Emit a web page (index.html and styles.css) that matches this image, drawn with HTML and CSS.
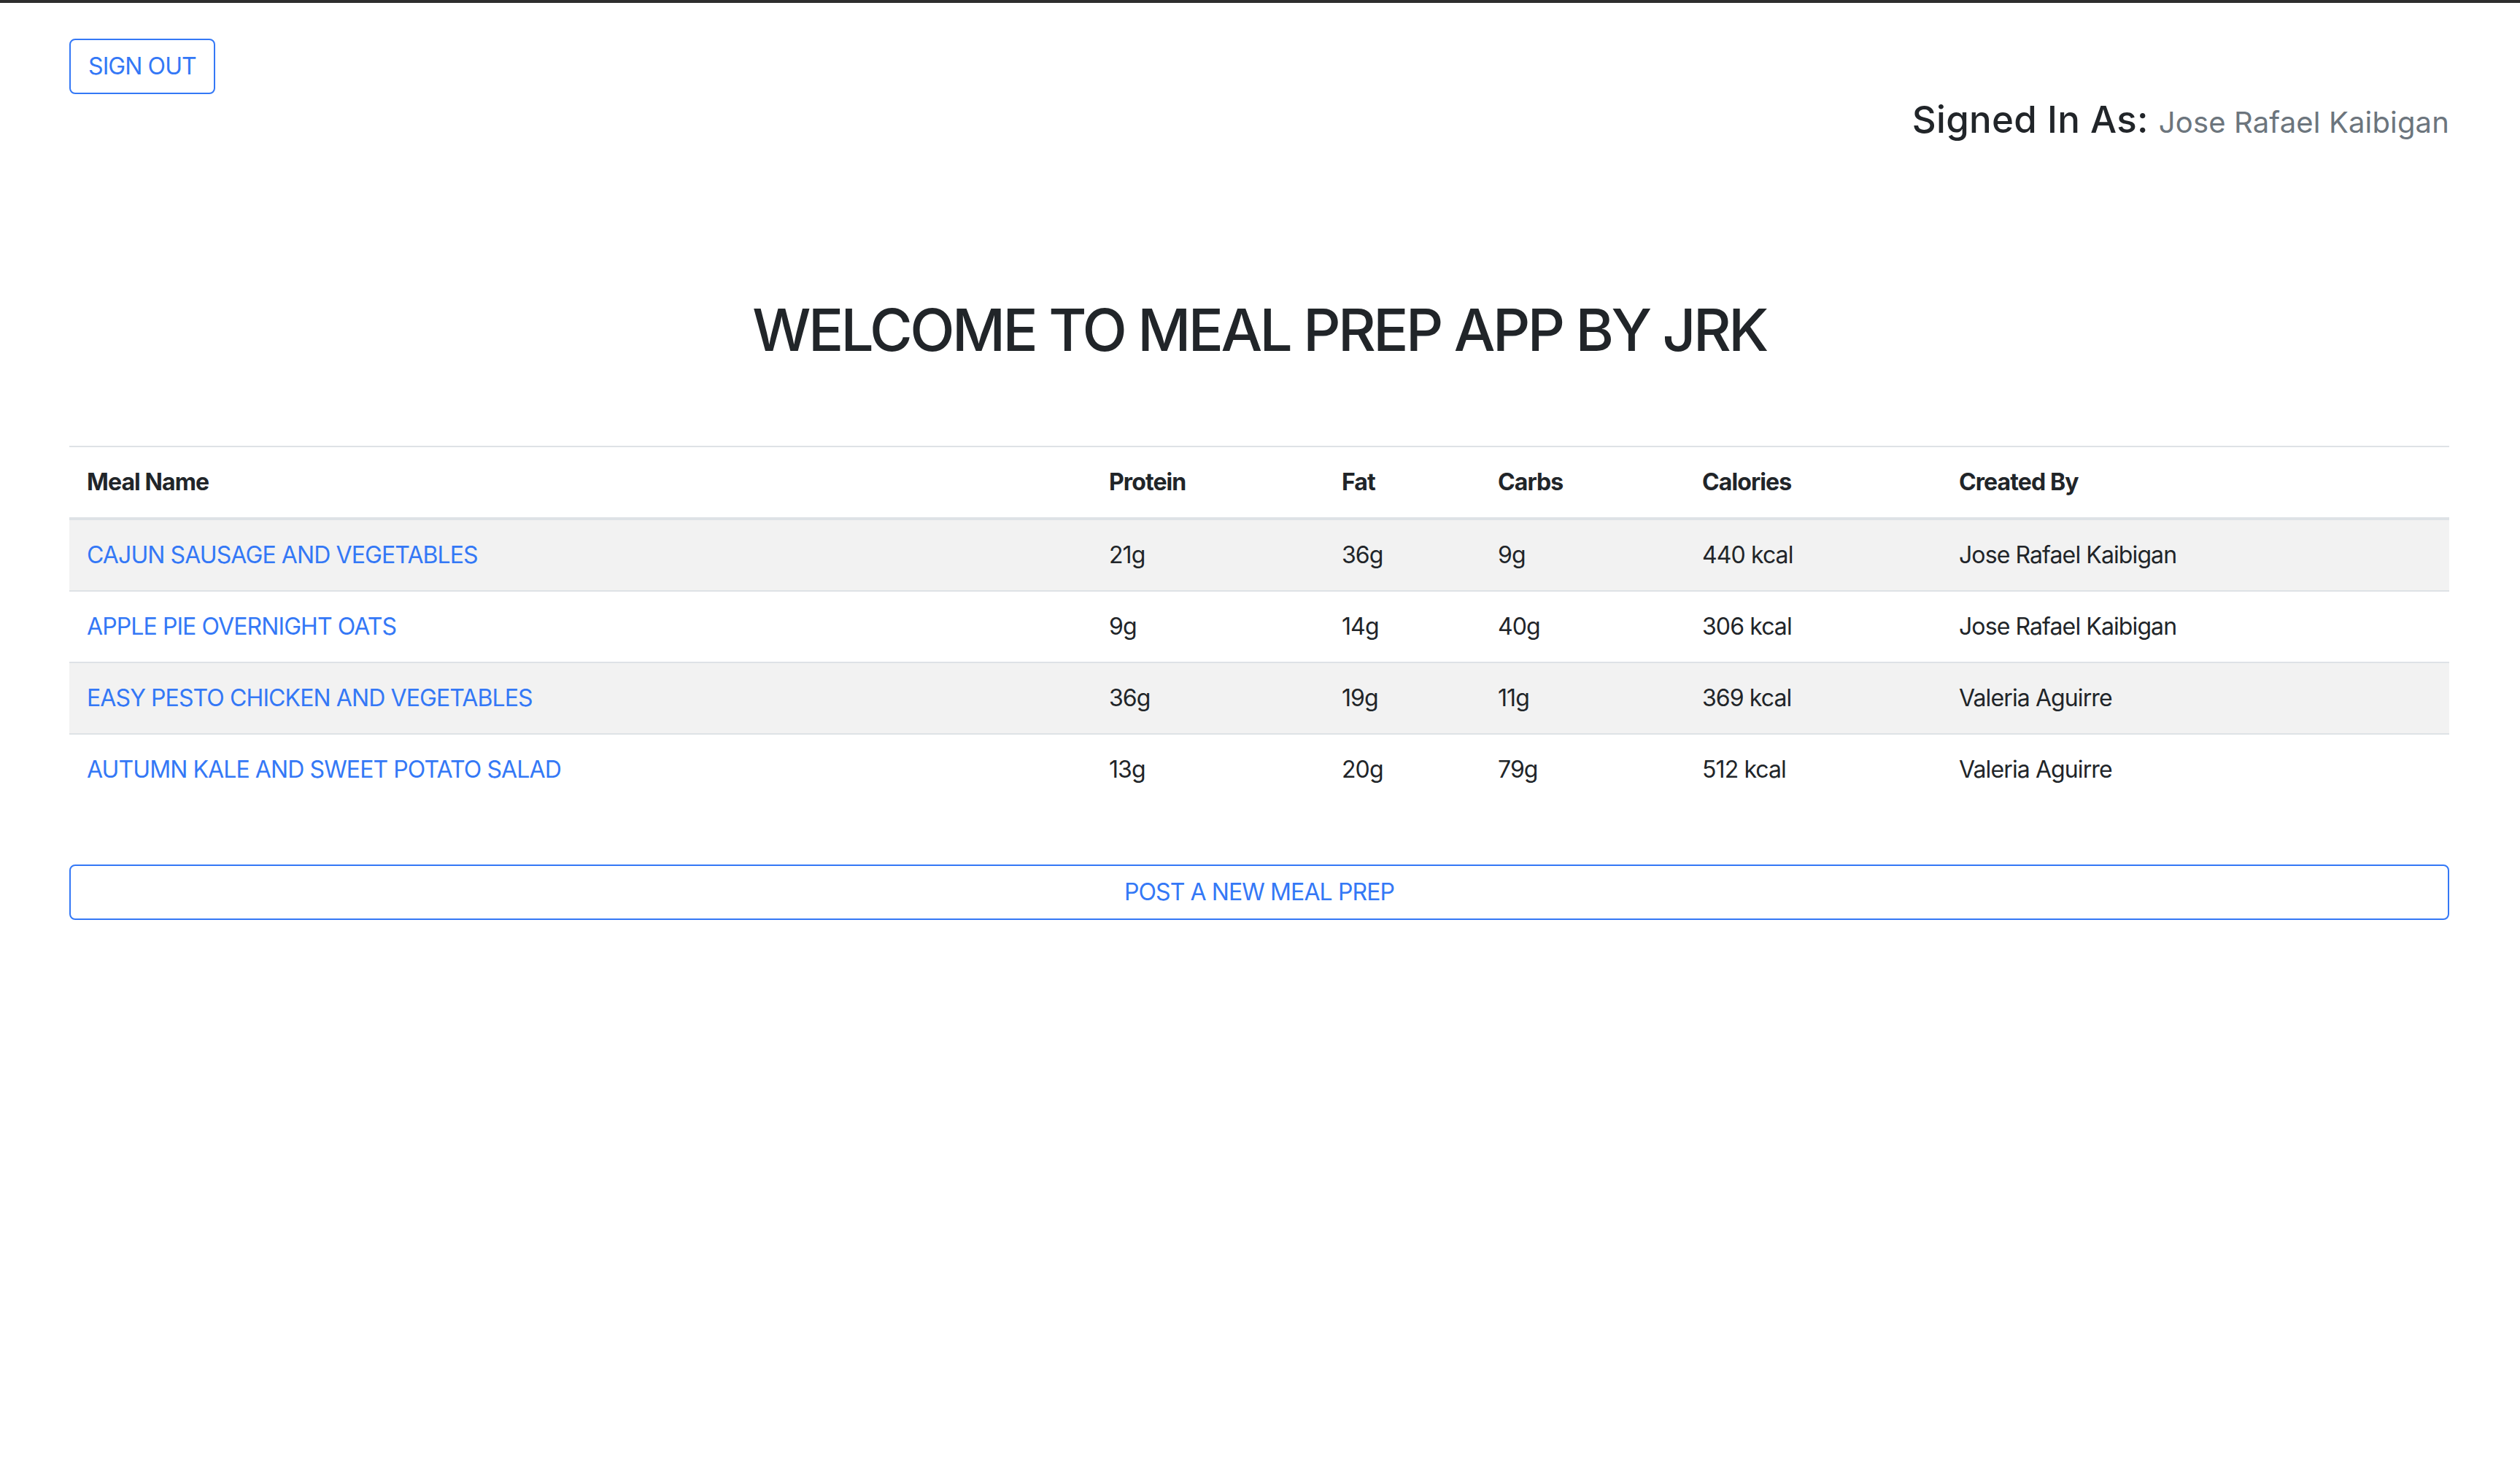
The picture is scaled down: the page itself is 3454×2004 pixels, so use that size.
FILE: index.html
```html
<!DOCTYPE html>
<html lang="en">
<head>
<meta charset="utf-8">
<title>Meal Prep App</title>
<link rel="stylesheet" href="styles.css">
</head>
<body>
<div class="topbar"></div>
<div class="page">
  <button class="btn btn-outline">SIGN OUT</button>
  <h4 class="signed-in">Signed In As: <small class="muted">Jose Rafael Kaibigan</small></h4>
  <h1 class="title">WELCOME TO MEAL PREP APP BY JRK</h1>
  <table class="meals">
    <colgroup>
      <col class="c-name"><col class="c-protein"><col class="c-fat"><col class="c-carbs"><col class="c-cal"><col class="c-by">
    </colgroup>
    <thead>
      <tr><th>Meal Name</th><th>Protein</th><th>Fat</th><th>Carbs</th><th>Calories</th><th>Created By</th></tr>
    </thead>
    <tbody>
      <tr><td><a href="#">CAJUN SAUSAGE AND VEGETABLES</a></td><td>21g</td><td>36g</td><td>9g</td><td>440 kcal</td><td>Jose Rafael Kaibigan</td></tr>
      <tr><td><a href="#">APPLE PIE OVERNIGHT OATS</a></td><td>9g</td><td>14g</td><td>40g</td><td>306 kcal</td><td>Jose Rafael Kaibigan</td></tr>
      <tr><td><a href="#">EASY PESTO CHICKEN AND VEGETABLES</a></td><td>36g</td><td>19g</td><td>11g</td><td>369 kcal</td><td>Valeria Aguirre</td></tr>
      <tr><td><a href="#">AUTUMN KALE AND SWEET POTATO SALAD</a></td><td>13g</td><td>20g</td><td>79g</td><td>512 kcal</td><td>Valeria Aguirre</td></tr>
    </tbody>
  </table>
  <button class="btn btn-outline btn-block">POST A NEW MEAL PREP</button>
</div>
</body>
</html>
```
FILE: styles.css
```css
html { font-size: 32px; }
body {
  margin: 0;
  background: #fff;
  color: #212529;
  font-family: Inter, "Noto Sans", "Liberation Sans", sans-serif;
  font-size: 1rem;
  line-height: 1.5;
  letter-spacing: -0.9px;
}
.topbar {
  height: 4px;
  background: #2e2e2e;
}
.page {
  padding: 49px 97px 0 95px;
}
.btn {
  display: inline-block;
  font-family: inherit;
  font-size: 1rem;
  line-height: 1.5;
  letter-spacing: -0.9px;
  padding: 12px 24px;
  border-radius: 8px;
  background: transparent;
  cursor: pointer;
}
.btn-outline {
  color: #3478f6;
  border: 2px solid #3478f6;
}
.btn-block {
  display: block;
  width: 100%;
}
.signed-in {
  margin: 4px 0 0;
  text-align: right;
  font-size: 51px;
  font-weight: 500;
  line-height: 1.2;
  letter-spacing: 0.3px;
}
.muted {
  color: #6c757d;
  font-size: 40px;
  font-weight: 400;
  letter-spacing: 0.15px;
}
.title {
  margin: 210px 0 0;
  text-align: center;
  font-size: 80px;
  font-weight: 500;
  line-height: 1.2;
  letter-spacing: -3.5px;
}
.meals {
  width: 100%;
  margin-top: 111px;
  border-collapse: collapse;
  table-layout: fixed;
}
.c-name { width: 1401px; }
.c-protein { width: 319px; }
.c-fat { width: 214px; }
.c-carbs { width: 280px; }
.c-cal { width: 352px; }
.meals th,
.meals td {
  padding: 24px;
  text-align: left;
  vertical-align: top;
  border-top: 2px solid #dee2e6;
}
.meals th {
  font-weight: 700;
  border-bottom: 4px solid #dee2e6;
}
.meals tbody tr:nth-child(odd) {
  background: #f2f2f2;
}
.meals a {
  color: #3478f6;
  text-decoration: none;
}
.meals + .btn-block {
  margin-top: 82px;
}
```
